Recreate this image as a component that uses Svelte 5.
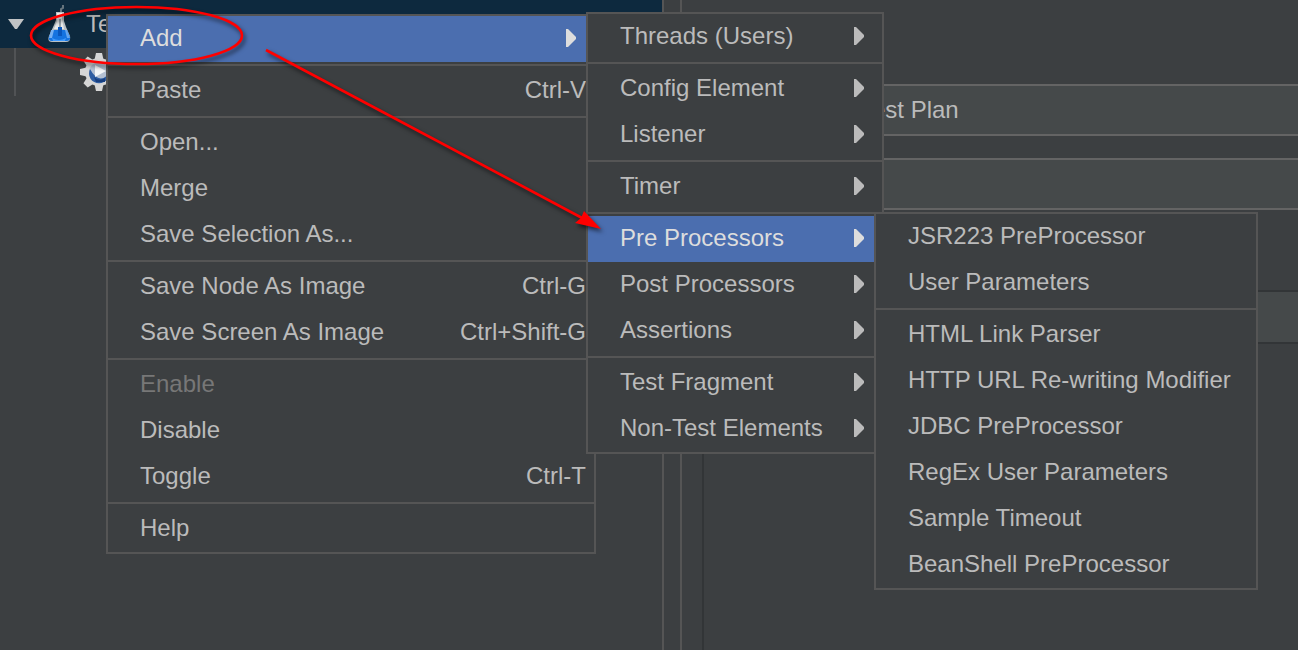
<script>
  const mainMenu = [
    [{ label: 'Add', sub: true, active: true }],
    [{ label: 'Paste', key: 'Ctrl-V' }],
    [{ label: 'Open...' }, { label: 'Merge' }, { label: 'Save Selection As...' }],
    [
      { label: 'Save Node As Image', key: 'Ctrl-G' },
      { label: 'Save Screen As Image', key: 'Ctrl+Shift-G' }
    ],
    [{ label: 'Enable', disabled: true }, { label: 'Disable' }, { label: 'Toggle', key: 'Ctrl-T' }],
    [{ label: 'Help' }]
  ];
  const addMenu = [
    [{ label: 'Threads (Users)', sub: true }],
    [{ label: 'Config Element', sub: true }, { label: 'Listener', sub: true }],
    [{ label: 'Timer', sub: true }],
    [
      { label: 'Pre Processors', sub: true, active: true },
      { label: 'Post Processors', sub: true },
      { label: 'Assertions', sub: true }
    ],
    [{ label: 'Test Fragment', sub: true }, { label: 'Non-Test Elements', sub: true }]
  ];
  const preMenu = [
    [{ label: 'JSR223 PreProcessor' }, { label: 'User Parameters' }],
    [
      { label: 'HTML Link Parser' },
      { label: 'HTTP URL Re-writing Modifier' },
      { label: 'JDBC PreProcessor' },
      { label: 'RegEx User Parameters' },
      { label: 'Sample Timeout' },
      { label: 'BeanShell PreProcessor' }
    ]
  ];
  const teeth = [0, 45, 90, 135, 180, 225, 270, 315];
</script>

{#snippet menu(groups, place)}
  <div class="menu {place}" role="menu">
    {#each groups as group}
      <div class="group" role="group">
        {#each group as item}
          <button class="item" class:active={item.active} disabled={item.disabled} role="menuitem">
            <span class="label">{item.label}</span>
            {#if item.key}<span class="key">{item.key}</span>{/if}
            {#if item.sub}
              <svg class="caret" viewBox="0 0 10 18" aria-hidden="true"><path d="M0 0H2L10 8V10L2 18H0Z" /></svg>
            {/if}
          </button>
        {/each}
      </div>
    {/each}
  </div>
{/snippet}

<div class="app">
  <aside class="tree">
    <div class="row selected">
      <svg class="toggle" viewBox="0 0 18 10" aria-hidden="true"><path d="M0 0H16L9 10H7Z" fill="#c0c3c5" /></svg>
      <svg class="flask" viewBox="0 0 24 38" aria-hidden="true">
        <path d="M13 7V4L15 3V0" fill="none" stroke="#66747d" stroke-width="2" />
        <path d="M8 7H16V16L18 22L22 31Q23 37 18 37H4Q-1 37 1 31L6 20L8 15Z" fill="#b9c0c4" />
        <path d="M9 8H14V14L16 24H6L9 16Z" fill="#e9ebec" />
        <path d="M11 14H13V22H11Z" fill="#9aa6ae" />
        <path d="M4 25H19L22 32Q23 36 18 36H4Q0 36 1 32Z" fill="#1473e0" />
        <path d="M3 25H6L4 33H1Z" fill="#75b0f2" />
        <path d="M17 25H19L22 33H19Z" fill="#63a5ef" />
        <path d="M10 22H14V31H10Z" fill="#0756bd" />
        <path d="M4 33Q11 37 18 33L17 36H5Z" fill="#3f9bff" />
      </svg>
      <span class="node">Test Plan</span>
    </div>
    <div class="row child">
      <svg class="gear" viewBox="0 0 38 38" aria-hidden="true">
        {#each teeth as angle}
          <path d="M14 9L16 0H22L24 9Z" fill="#d6d6d6" transform="rotate({angle} 19 19)" />
        {/each}
        <circle cx="19" cy="19" r="14" fill="#d6d6d6" />
        <circle cx="19" cy="19" r="10" fill="#b4c0d2" />
        <path d="M10 16A10 10 0 1 0 28 16V22Q18 31 10 16Z" fill="#2f5da2" />
        <path d="M14 24Q19 29 25 25V29H16Z" fill="#173f80" />
        <path d="M15 12L26 18L15 24Z" fill="#f4f6f8" />
      </svg>
    </div>
  </aside>
  <div class="divider"></div>
  <main class="editor">
    <input aria-label="Name" value="Test Plan" />
    <input aria-label="Comments" />
    <section class="variables"><div class="head"></div></section>
  </main>

  {@render menu(mainMenu, 'first')}
  {@render menu(addMenu, 'second')}
  {@render menu(preMenu, 'third')}

  <svg class="marks" viewBox="0 0 620 250" aria-hidden="true">
    <ellipse cx="136.500" cy="35.500" rx="105.500" ry="28.500" fill="none" stroke="#f00" stroke-width="2.600" />
    <path d="M266 50L584 219" stroke="#f00" stroke-width="2.600" />
    <path d="M601 229L575 223L581 218L584 211Z" fill="#f00" />
  </svg>
</div>

<style>
  :global(body) {
    margin: 0;
    background: #3c3f41;
  }
  .app {
    position: relative;
    display: flex;
    min-height: 100vh;
    overflow: hidden;
    background: #3c3f41;
    color: #bbb;
    font: 24px/46px "Liberation Sans", Arial, sans-serif;
  }
  .tree {
    flex: 0 0 51%;
    border-right: 2px solid #555;
  }
  .row {
    display: flex;
    align-items: center;
    height: 48px;
    box-sizing: border-box;
    white-space: nowrap;
  }
  .selected {
    background: #0d293e;
    padding-left: 8px;
  }
  .toggle {
    width: 18px;
    height: 10px;
    margin-right: 22px;
  }
  .flask {
    width: 24px;
    height: 38px;
    margin-right: 14px;
  }
  .node {
    width: 20px;
    overflow: hidden;
  }
  .child {
    margin-left: 14px;
    padding-left: 64px;
    border-left: 2px solid #515355;
  }
  .gear {
    width: 38px;
    height: 38px;
  }
  .divider {
    flex: 0 0 16px;
    border-right: 2px solid #555;
  }
  .editor {
    flex: 1;
    display: flex;
    flex-direction: column;
    padding: 84px 0 0 20px;
  }
  input {
    height: 52px;
    box-sizing: border-box;
    margin: 0 0 22px 148px;
    padding: 0 8px;
    border: 2px solid #646464;
    border-right: 0;
    border-radius: 0;
    background: #45494a;
    color: #bbb;
    font: inherit;
  }
  .variables {
    flex: 1;
    margin-top: 58px;
    border-left: 2px solid #323537;
  }
  .head {
    height: 50px;
    border: solid #323537;
    border-width: 2px 0;
    background: #45494a;
  }
  .menu {
    position: absolute;
    box-sizing: border-box;
    border: 2px solid #555;
    background: #3c3f41;
  }
  .first {
    left: 106px;
    top: 14px;
    width: 490px;
  }
  .second {
    left: 586px;
    top: 12px;
    width: 298px;
  }
  .third {
    left: 874px;
    top: 212px;
    width: 384px;
  }
  .group + .group {
    margin-top: 2px;
    padding-top: 2px;
    border-top: 2px solid #555;
  }
  .item {
    display: flex;
    align-items: center;
    width: 100%;
    height: 46px;
    margin: 0;
    padding: 0 8px 2px 32px;
    border: 0;
    background: none;
    color: #bbb;
    font: inherit;
    text-align: left;
    white-space: nowrap;
  }
  .item:disabled {
    color: #777;
  }
  .item.active {
    background: #4b6eaf;
    color: #ddd;
  }
  .label {
    flex: 1;
  }
  .caret {
    width: 10px;
    height: 18px;
    margin-right: 10px;
    fill: currentColor;
  }
  .marks {
    position: absolute;
    left: 0;
    top: 0;
    width: 620px;
    height: 250px;
    pointer-events: none;
    filter: drop-shadow(2px 3px 2px rgba(0, 0, 0, 0.6));
  }
</style>
